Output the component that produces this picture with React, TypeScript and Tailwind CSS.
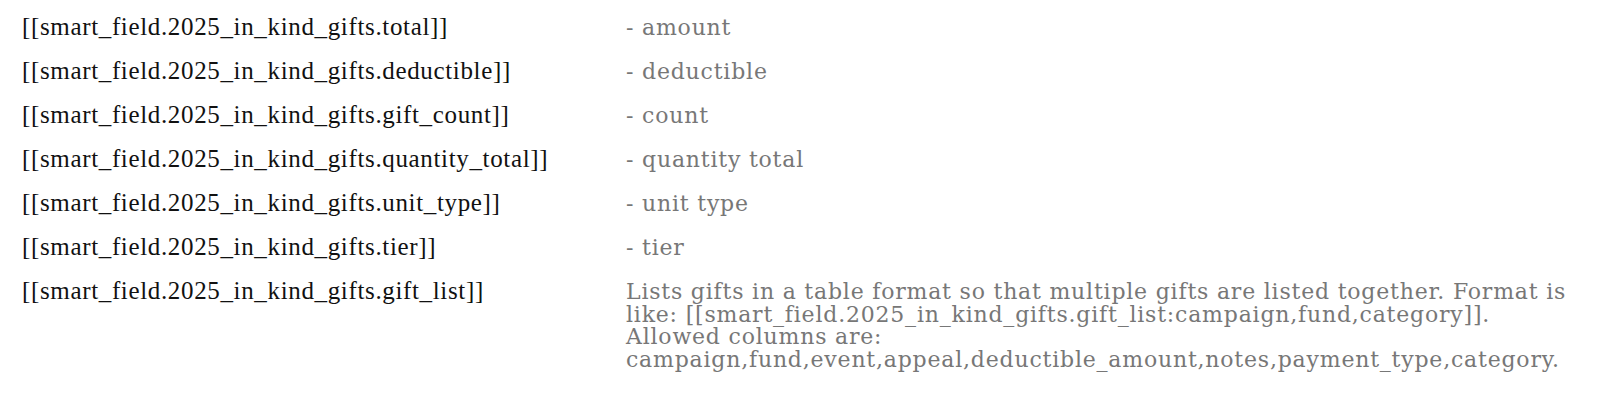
import React from "react";

const rows: { field: string; desc: React.ReactNode }[] = [
  { field: "[[smart_field.2025_in_kind_gifts.total]]", desc: "- amount" },
  { field: "[[smart_field.2025_in_kind_gifts.deductible]]", desc: "- deductible" },
  { field: "[[smart_field.2025_in_kind_gifts.gift_count]]", desc: "- count" },
  { field: "[[smart_field.2025_in_kind_gifts.quantity_total]]", desc: "- quantity total" },
  { field: "[[smart_field.2025_in_kind_gifts.unit_type]]", desc: "- unit type" },
  { field: "[[smart_field.2025_in_kind_gifts.tier]]", desc: "- tier" },
  {
    field: "[[smart_field.2025_in_kind_gifts.gift_list]]",
    desc: (
      <>
        Lists gifts in a table format so that multiple gifts are listed together. Format is
        <br />
        like: [[smart_field.2025_in_kind_gifts.gift_list:campaign,fund,category]].
        <br />
        Allowed columns are:
        <br />
        campaign,fund,event,appeal,deductible_amount,notes,payment_type,category.
      </>
    ),
  },
];

export default function App() {
  return (
    <div className="w-[1600px] h-[408px] bg-white pl-[22px] pt-[6px]">
      {rows.map((r) => (
        <div key={r.field} className="flex items-baseline py-[10.3px]">
          <div className="w-[604px] shrink-0 text-[25px] leading-[22.4px] tracking-[0.65px] text-[#111111] font-['Liberation_Serif',serif]">
            {r.field}
          </div>
          <div className="w-[972px] whitespace-nowrap text-[22px] leading-[22.4px] tracking-[0.8px] text-[#777777] font-['DejaVu_Serif',serif]">
            {r.desc}
          </div>
        </div>
      ))}
    </div>
  );
}
